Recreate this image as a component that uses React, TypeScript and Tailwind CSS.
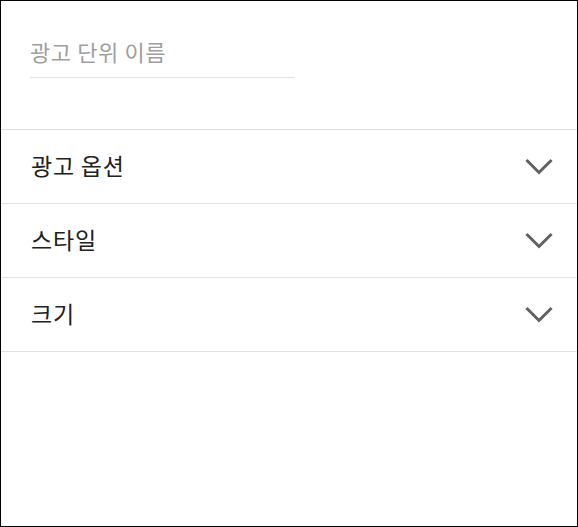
import React from "react";

const font = { fontFamily: '"Noto Sans CJK KR", "Noto Sans", sans-serif' };

function Chevron() {
  return (
    <svg width="28" height="18" viewBox="0 0 28 18" fill="none">
      <polyline points="2.5,3 14,14.5 25.5,3" stroke="#616161" strokeWidth="3" strokeLinecap="square" />
    </svg>
  );
}

function Row({ label }: { label: string }) {
  return (
    <div className="flex h-[74px] items-center justify-between border-b border-[#e0e0e0] pl-[30px] pr-[24px]">
      <span className="mb-[4px] text-[23px] leading-[30px] tracking-[0.8px] text-[#212121]">{label}</span>
      <Chevron />
    </div>
  );
}

export default function App() {
  return (
    <div className="h-[527px] w-[578px] border border-black bg-white" style={font}>
      <div className="h-[129px] border-b border-[#e0e0e0] pt-[35px] pl-[29px]">
        <div className="w-[265px] border-b border-[#e0e0e0] pb-[11px] text-[22px] leading-[30px] tracking-[0.6px] text-[#9e9e9e]">
          광고 단위 이름
        </div>
      </div>
      <Row label="광고 옵션" />
      <Row label="스타일" />
      <Row label="크기" />
    </div>
  );
}
